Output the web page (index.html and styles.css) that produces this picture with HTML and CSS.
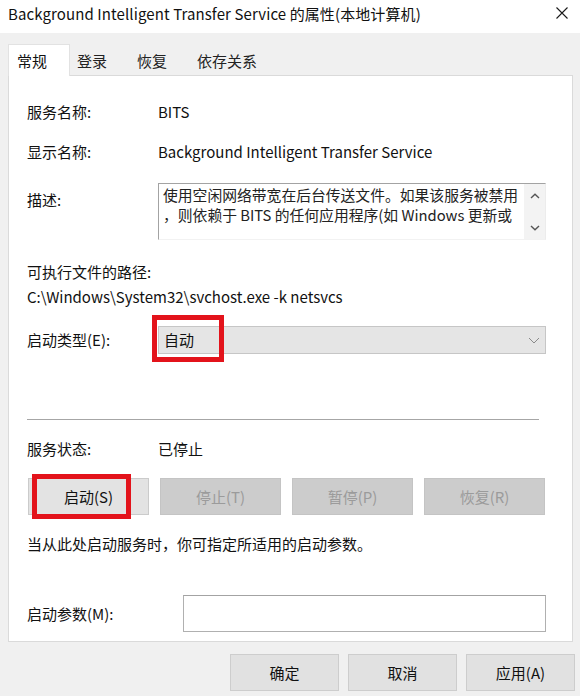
FILE: index.html
```html
<!DOCTYPE html>
<html lang="zh-CN">
<head>
<meta charset="utf-8">
<title>Background Intelligent Transfer Service 的属性(本地计算机)</title>
<link rel="stylesheet" href="styles.css">
</head>
<body>
<div class="titlebar">
  <span class="title">Background Intelligent Transfer Service 的属性(本地计算机)</span>
  <svg class="close" width="12" height="12" viewBox="0 0 12 12"><path d="M0.5 0.5L11.5 11.5M11.5 0.5L0.5 11.5" stroke="#1a1a1a" stroke-width="1.1" fill="none"/></svg>
</div>
<div class="tabs">
  <div class="tab sel">常规</div>
  <div class="tab">登录</div>
  <div class="tab">恢复</div>
  <div class="tab">依存关系</div>
</div>
<div class="panel">
  <div class="row r1"><span class="lbl">服务名称:</span><span>BITS</span></div>
  <div class="row r2"><span class="lbl">显示名称:</span><span>Background Intelligent Transfer Service</span></div>
  <div class="row r3">
    <span class="lbl desc-lbl">描述:</span>
    <div class="descbox">
      <div class="desctext">使用空闲网络带宽在后台传送文件。如果该服务被禁用<br>，则依赖于 BITS 的任何应用程序(如 Windows 更新或</div>
      <div class="scroll">
        <svg width="10" height="6" viewBox="0 0 10 6"><path d="M1 5L5 1.2L9 5" stroke="#555" stroke-width="1.4" fill="none"/></svg>
        <svg width="10" height="6" viewBox="0 0 10 6"><path d="M1 1L5 4.8L9 1" stroke="#555" stroke-width="1.4" fill="none"/></svg>
      </div>
    </div>
  </div>
  <div class="row r4">可执行文件的路径:</div>
  <div class="row r5">C:\Windows\System32\svchost.exe -k netsvcs</div>
  <div class="row r6">
    <span class="lbl">启动类型(E):</span>
    <div class="select">
      <span class="selval">自动</span>
      <svg width="12" height="7" viewBox="0 0 12 7"><path d="M1 1L6 6L11 1" stroke="#8a8a8a" stroke-width="1" fill="none"/></svg>
      <div class="hl hl-select"></div>
    </div>
  </div>
  <div class="sep"></div>
  <div class="row r7"><span class="lbl">服务状态:</span><span>已停止</span></div>
  <div class="btnrow">
    <div class="btn"><span>启动(S)</span><div class="hl hl-start"></div></div>
    <div class="btn dis">停止(T)</div>
    <div class="btn dis">暂停(P)</div>
    <div class="btn dis">恢复(R)</div>
  </div>
  <div class="row r8">当从此处启动服务时，你可指定所适用的启动参数。</div>
  <div class="row r9">
    <span class="lbl lbl-wide">启动参数(M):</span>
    <div class="input"></div>
  </div>
</div>
<div class="footer">
  <div class="fbtn">确定</div>
  <div class="fbtn">取消</div>
  <div class="fbtn">应用(A)</div>
</div>
</body>
</html>
```
FILE: styles.css
```css
html, body {
  margin: 0;
  padding: 0;
}
body {
  width: 580px;
  height: 696px;
  overflow: hidden;
  background: #f0f0f0;
  font-family: "Noto Sans CJK SC", "Noto Sans", sans-serif;
  font-size: 15px;
  color: #111;
}
.titlebar {
  height: 33px;
  background: #fff;
  display: flex;
  align-items: center;
  justify-content: space-between;
  padding: 0 12px 0 8px;
  box-sizing: border-box;
}
.title {
  line-height: 20px;
  margin-top: -5px;
  letter-spacing: 0.1px;
}
.close {
  margin-top: -7px;
}
.tabs {
  display: flex;
  align-items: flex-end;
  height: 42px;
  padding-left: 8px;
  position: relative;
  z-index: 2;
}
.tab {
  height: 30px;
  line-height: 32px;
  color: #222;
  white-space: nowrap;
}
.tab + .tab {
  margin-left: 30px;
}
.tab.sel {
  background: #fff;
  height: 31px;
  line-height: 31px;
  margin-bottom: -1px;
  padding: 0 22px 0 8px;
  border: 1px solid #e2e2e2;
  border-bottom: none;
  color: #111;
}
.tab.sel + .tab {
  margin-left: 7px;
}
.panel {
  background: #fff;
  border: 1px solid #dadada;
  margin-left: 8px;
  width: 565px;
  height: 567px;
  box-sizing: border-box;
  padding: 0 26px 0 18px;
  position: relative;
  z-index: 1;
}
.row {
  display: flex;
  line-height: 24px;
}
.lbl {
  width: 131px;
  flex: none;
}
.lbl-wide {
  width: 156px;
}
.r1 { margin-top: 24px; }
.r2 { margin-top: 16px; }
.r3 { margin-top: 19px; align-items: flex-start; }
.desc-lbl { margin-top: 5px; }
.descbox {
  flex: 1;
  height: 57px;
  box-sizing: border-box;
  border-top: 1px solid #a3a3a3;
  border-left: 1px solid #a3a3a3;
  border-right: 1px solid #ececec;
  border-bottom: 1px solid #f2f2f2;
  display: flex;
  color: #222;
}
.desctext {
  flex: 1;
  padding: 1px 0 0 4px;
  line-height: 20px;
  font-size: 14.8px;
  white-space: nowrap;
}
.scroll {
  width: 21px;
  background: #f3f3f3;
  display: flex;
  flex-direction: column;
  justify-content: space-between;
  align-items: center;
  padding: 9px 0 8px;
  box-sizing: border-box;
}
.r4 { margin-top: 20px; }
.r5 { margin-top: 1px; }
.r6 { margin-top: 17px; align-items: center; }
.select {
  flex: 1;
  height: 28px;
  box-sizing: border-box;
  background: #e5e5e5;
  border: 1px solid #c6c6c6;
  display: flex;
  align-items: center;
  justify-content: space-between;
  padding: 0 5px 0 5px;
  position: relative;
}
.hl {
  position: absolute;
  border: 5px solid #e3131b;
  box-sizing: border-box;
  pointer-events: none;
}
.hl-select {
  left: -7px;
  top: -12px;
  width: 72px;
  height: 47px;
}
.sep {
  margin-top: 65px;
  margin-right: 7px;
  border-top: 1px solid #a6a6a6;
  border-bottom: 1px solid #fff;
}
.r7 { margin-top: 16px; }
.btnrow {
  margin: 17px 1px 0 1px;
  display: grid;
  grid-template-columns: repeat(4, 1fr);
  column-gap: 11px;
}
.btn {
  height: 37px;
  box-sizing: border-box;
  background: #e3e3e3;
  border: 1px solid #cbcbcb;
  display: flex;
  align-items: center;
  justify-content: center;
  position: relative;
}
.btn.dis {
  background: #cccccc;
  border-color: #c4c4c4;
  color: #9b9b9b;
}
.hl-start {
  left: 3px;
  top: -5px;
  width: 99px;
  height: 45px;
}
.r8 { margin-top: 17px; }
.r9 { margin-top: 39px; align-items: center; }
.input {
  flex: 1;
  height: 37px;
  box-sizing: border-box;
  border: 1px solid #b0b0b0;
  border-top-color: #a3a3a3;
  background: #fff;
}
.footer {
  display: flex;
  justify-content: flex-end;
  gap: 9px;
  margin-top: 12px;
  padding-right: 5px;
}
.fbtn {
  width: 109px;
  height: 37px;
  box-sizing: border-box;
  background: #e1e1e1;
  border: 1px solid #cdcdcd;
  display: flex;
  align-items: center;
  justify-content: center;
  color: #111;
}
```
